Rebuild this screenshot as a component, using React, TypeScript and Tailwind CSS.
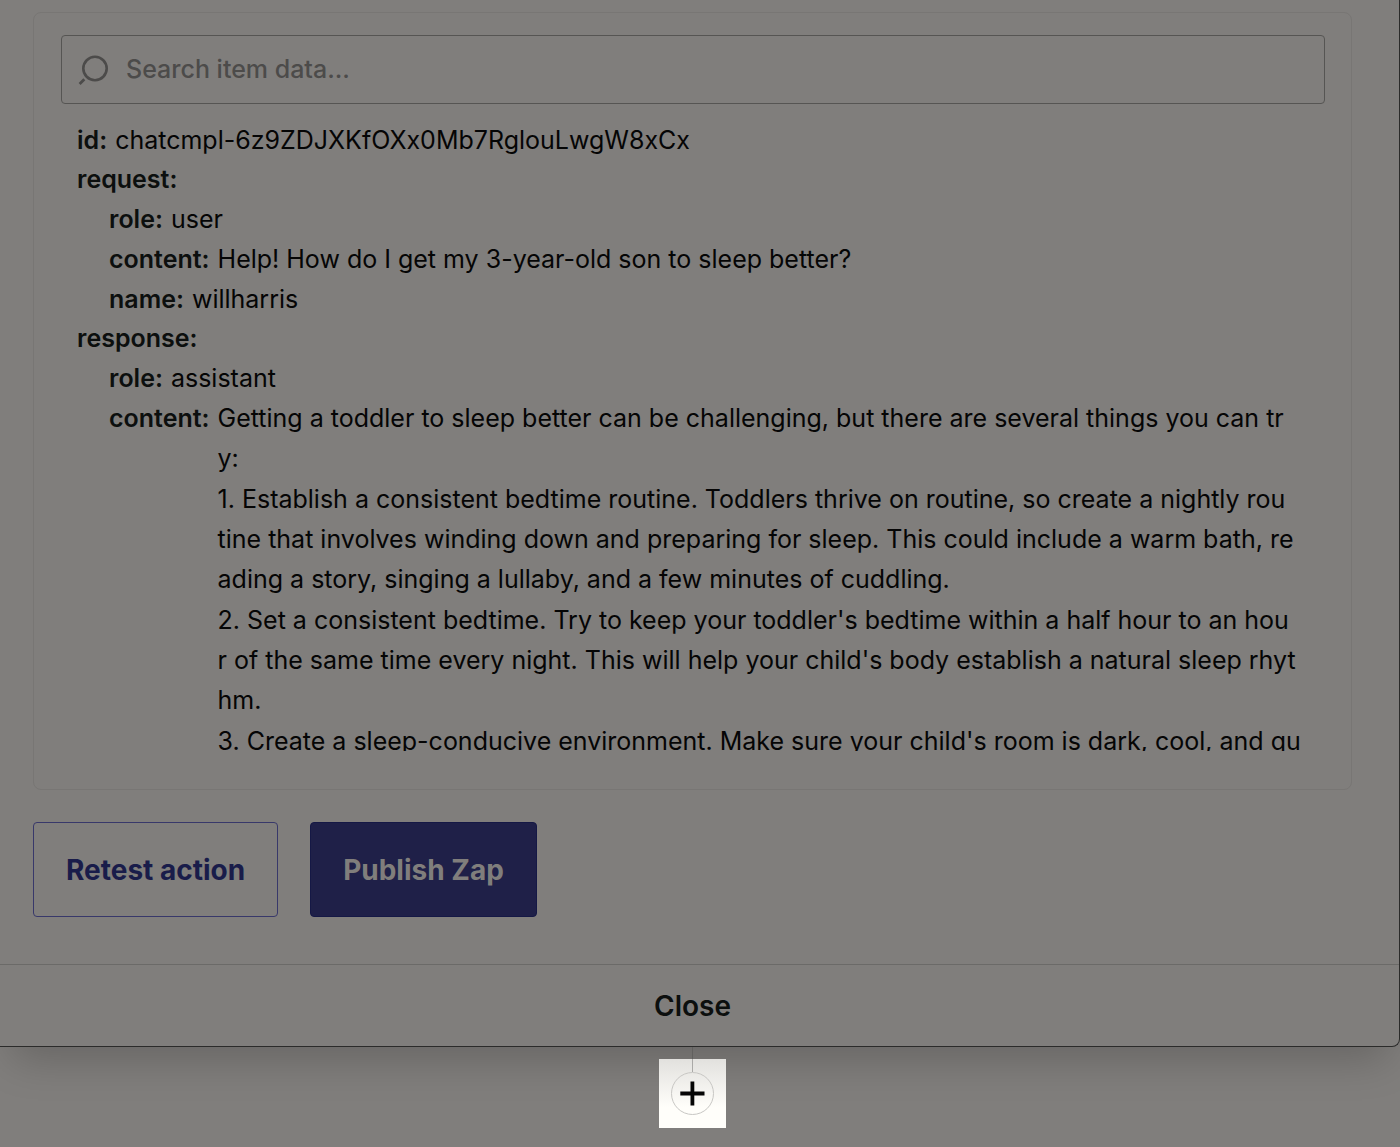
import React from "react";

type Entry = {
    label: string;
    value?: string[];
    nested?: boolean;
};

const entries: Entry[] = [
    { label: "id:", value: ["chatcmpl-6z9ZDJXKfOXx0Mb7RglouLwgW8xCx"] },
    { label: "request:" },
    { label: "role:", value: ["user"], nested: true },
    { label: "content:", value: ["Help! How do I get my 3-year-old son to sleep better?"], nested: true },
    { label: "name:", value: ["willharris"], nested: true },
    { label: "response:" },
    { label: "role:", value: ["assistant"], nested: true },
    {
        label: "content:",
        nested: true,
        value: [
            "Getting a toddler to sleep better can be challenging, but there are several things you can tr\ny:",
            "1. Establish a consistent bedtime routine. Toddlers thrive on routine, so create a nightly rou\ntine that involves winding down and preparing for sleep. This could include a warm bath, re\nading a story, singing a lullaby, and a few minutes of cuddling.",
            "2. Set a consistent bedtime. Try to keep your toddler's bedtime within a half hour to an hou\nr of the same time every night. This will help your child's body establish a natural sleep rhyt\nhm.",
            "3. Create a sleep-conducive environment. Make sure your child's room is dark, cool, and qu",
        ],
    },
];

const SearchIcon = () => (
    <svg className="h-8 w-8 shrink-0" viewBox="0 0 32 32" fill="none" stroke="#4c4b4a" aria-hidden="true">
        <circle cx="17" cy="14.5" r="11.7" strokeWidth="2.6" />
        <path d="M6.3 25.2 L1.6 29.9" strokeWidth="2.8" />
    </svg>
);

const PlusIcon = () => (
    <svg className="h-[25px] w-[25px]" viewBox="0 0 25 25" fill="none" stroke="#050505" strokeWidth="3.8" aria-hidden="true">
        <path d="M12.4 0.5V24.5M0.3 12.5H24.5" />
    </svg>
);

const DataRow = ({ label, value, nested }: Entry) => (
    <div className={nested ? "flex gap-2 pl-8" : "flex gap-2"}>
        <dt className={value ? "shrink-0 font-semibold text-[#0c0f0e]" : "shrink-0 font-semibold leading-[39px] text-[#0c0f0e]"}>
            {label}
        </dt>
        {value && (
            <dd className="flex min-w-0 flex-1 flex-col gap-px break-all whitespace-pre-line text-[#050505]">
                {value.map((line) => (
                    <p key={line}>{line}</p>
                ))}
            </dd>
        )}
    </div>
);

const App = () => {
    return (
        <div className="min-h-screen bg-[#807e7c] font-['Inter',sans-serif]">
            {/* STEP PANEL */}
            <main className="rounded-br-lg border-r border-b border-[#2b2b2a] bg-[#807e7c] pt-3 shadow-[0_24px_40px_-12px_rgba(0,0,0,0.2)]">
                <div className="pr-[47px] pl-[33px]">
                    <section className="rounded-lg border border-[#787674] pt-[22px] pr-[26px] pb-[38px] pl-[27px]">
                        <label className="flex h-[69px] items-center gap-4 rounded border border-[#565553] px-4">
                            <SearchIcon />
                            <input
                                type="text"
                                aria-label="Search item data"
                                placeholder="Search item data..."
                                className="min-w-0 flex-1 bg-transparent text-[25px] font-medium outline-none placeholder:text-[#4c4b4a]"
                            />
                        </label>
                        <dl className="mt-4 h-[631px] overflow-hidden px-4 text-[25px] leading-[40px]">
                            {entries.map((entry, index) => (
                                <DataRow key={index} {...entry} />
                            ))}
                        </dl>
                    </section>

                    <div className="mt-8 mb-[47px] flex gap-8">
                        <button
                            type="button"
                            className="h-[95px] rounded border border-[#38386a] px-8 text-[28px] font-bold text-[#191c4a]"
                        >
                            Retest action
                        </button>
                        <button
                            type="button"
                            className="h-[95px] rounded border border-[#151845] bg-[#1f2048] px-8 text-[28px] font-bold text-[#807e7c]"
                        >
                            Publish Zap
                        </button>
                    </div>
                </div>

                <footer className="border-t border-[#6b6a68] pr-[14px]">
                    <button type="button" className="h-[81px] w-full text-[28px] font-semibold text-[#0c0f0e]">
                        Close
                    </button>
                </footer>
            </main>

            {/* ADD STEP */}
            <div className="flex flex-col items-center pr-[15px]">
                <div className="h-3 w-px bg-[#61605e]" />
                <div className="flex h-[69px] w-[67px] flex-col items-center bg-gradient-to-b from-[#e2e1de] to-[#fffefa] to-70%">
                    <div className="h-[13px] w-px bg-[#aaa9a7]" />
                    <button
                        type="button"
                        aria-label="Add step"
                        className="flex h-[43px] w-[43px] items-center justify-center rounded-full border border-[#c8c7c4]"
                    >
                        <PlusIcon />
                    </button>
                </div>
            </div>
        </div>
    );
};

export default App;
